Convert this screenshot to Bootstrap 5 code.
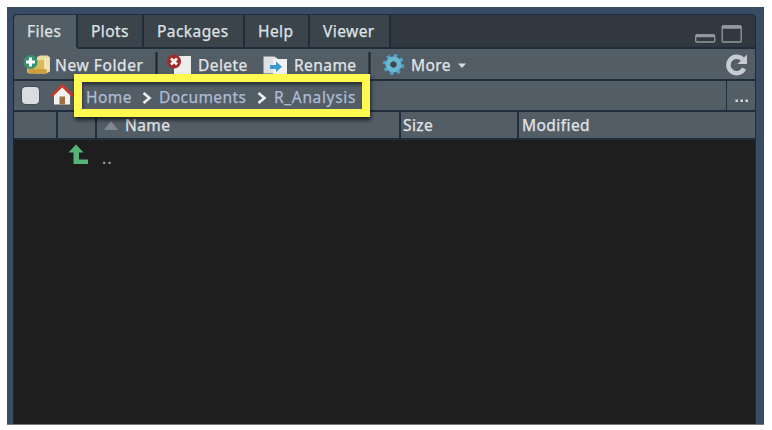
<!DOCTYPE html>
<html lang="en">
<head>
<meta charset="utf-8">
<meta name="viewport" content="width=device-width, initial-scale=1">
<title>Files pane</title>
<link href="https://cdn.jsdelivr.net/npm/bootstrap@5.3.0/dist/css/bootstrap.min.css" rel="stylesheet">
<style>
body{background:#fff;font-family:"Noto Sans","Open Sans",sans-serif;font-size:15.5px;line-height:20px;letter-spacing:.43px;color:#e2e5e8;-webkit-text-stroke:.25px}
svg{display:block;flex:none}
.pane{width:757px;height:418px;margin:7px 0 0 7px;padding:7px 8px 0 6px;background:#394c64;border-bottom:1px solid #777}
.pane-in{height:410px;background:#1e1e1e;border-left:1px solid #1d2a3c;border-right:1px solid #1d2a3c;border-radius:4px 4px 0 0;overflow:hidden}
.tabs{height:35px;background:#31383f;border-top:1px solid #1e2c3e}
.tabs button{border:0;padding:0 0 0 13px;text-align:left;color:#dfe2e5;background:#3c444b;border-right:2px solid #1f2d3d;border-bottom:2px solid #1f2d3d;letter-spacing:inherit;line-height:30px;-webkit-text-stroke:inherit}
.tabs button.on{background:#535d66;border-bottom-color:#535d66;border-radius:4px 0 0 0}
.tab-fill{border-bottom:2px solid #1f2d3d}
.bar{background:#535d66;border-bottom:2px solid #1f2d3d}
.tools{height:32px}.crumbs{height:31px}.heads{height:28px}
.w1{width:64px}.w2{width:66px}.w3{width:101px}.w4{width:65px}.w5{width:81px}
.tools .lbl{white-space:nowrap;padding-top:1px}
.t-new{width:88px;letter-spacing:.6px}.t-del{width:51px}.t-ren{width:63px}.t-more{width:43px}
.chk{width:17px;height:17px;margin-left:8px;background:#d9dce0;border-radius:4px;box-shadow:0 0 1px 1px #454e57}
.dots{width:29px;border-left:1px solid #1f2d3d}
.heads>div{border-right:2px solid #1f2d3d;line-height:26px;height:26px}
.heads>div:last-child{border:0}
.heads .h1c{width:44px}.heads .h2c{width:39px}.heads .h3c{width:304px}.heads .h4c{width:118px;padding-left:2px}.heads .h5c{padding-left:3px}
.up-name{margin-left:-22px;margin-top:8px;color:#aaa5bb;letter-spacing:1.3px}
.trail{left:74px;top:74px;width:296px;height:43px;border:8px solid #fff951;box-shadow:1px 3px 4px rgba(0,0,0,.65),inset 1px 3px 3px rgba(0,0,0,.45);background:#535d66;color:#aebbd5;padding-left:4px}
.trail a{color:inherit;text-decoration:none;white-space:nowrap;flex:none;padding-top:3px}
.c1{width:46px}.c2{width:88px}.c3{width:84px;letter-spacing:.65px}
</style>
<script src="https://cdn.jsdelivr.net/npm/bootstrap@5.3.0/dist/js/bootstrap.bundle.min.js"></script>
</head>
<body class="overflow-hidden">
<main class="pane">
<div class="pane-in">
  <div class="tabs d-flex">
    <button class="w1 on">Files</button><button class="w2">Plots</button><button class="w3">Packages</button><button class="w4">Help</button><button class="w5">Viewer</button>
    <div class="tab-fill flex-grow-1 d-flex justify-content-end">
      <svg width="62" height="30" viewBox="693 15 62 30" fill="none" stroke="#929a9f" stroke-width="1.3"><rect x="695.7" y="35" width="19" height="7" rx="1"/><path d="M696 35.700h18.500" stroke-width="3"/><rect x="722.2" y="26" width="19" height="16" rx="1"/><path d="M722.500 27h18.500" stroke-width="3.500"/></svg>
    </div>
  </div>
  <div class="bar tools d-flex align-items-center">
    <svg width="41" height="30" viewBox="14 49 41 30"><path d="M37 57l3-1.500h8l2 2v14l-4 2h-9z" fill="#e8dba8"/><path d="M45.500 58v13M48 58v12" stroke="#f7f1d2" stroke-width="1"/><path d="M27 60h17v13.500H29q-2 0-2-2z" fill="#dcb85c"/><path d="M28 69h18.500v4.500H29z" fill="#cba03d"/><circle cx="30.500" cy="62" r="7" fill="#36936f"/><path d="M30.500 57.500v9M26 62h9" stroke="#fff" stroke-width="3"/></svg>
    <span class="lbl t-new">New Folder</span>
    <svg width="55" height="30" viewBox="143 49 55 30"><path d="M155.500 52h2v22h-2z" fill="#1c242d"/><path d="M174 56h17v18h-17z" fill="#eeeeed"/><circle cx="174" cy="61.500" r="7" fill="#a52b2b"/><path d="m171 58.500 6 6m0-6-6 6" stroke="#fff" stroke-width="2.500"/></svg>
    <span class="lbl t-del">Delete</span>
    <svg width="45" height="30" viewBox="249 49 45 30"><path d="M263.500 56.500h11l3 2v15h-14z" fill="#dfe0e2"/><path d="M273 59h14v15h-14z" fill="#f1f1ef"/><path d="M270 65h6v-3.500l6 5.300-6 5.200v-3h-6z" fill="#3999ce"/></svg>
    <span class="lbl t-ren">Rename</span>
    <svg width="54" height="30" viewBox="357 49 54 30"><path d="M368.500 52h2v22h-2z" fill="#1c242d"/><circle cx="393.500" cy="64.500" r="9.100" fill="none" stroke="#4aa5c8" stroke-width="3" stroke-dasharray="3.400 3.750"/><circle cx="393.500" cy="64.500" r="5.500" fill="none" stroke="#68b7cf" stroke-width="5"/><circle cx="393.500" cy="64.500" r="3" fill="#3d4851"/></svg>
    <span class="lbl t-more">More</span>
    <svg width="14" height="30" viewBox="454 49 14 30"><path d="M458 63.500h8l-4 4.500z" fill="#d6dadd"/></svg>
    <svg class="ms-auto" width="36" height="30" viewBox="719 49 36 30"><path d="M744 68.500a8.200 8.200 0 1 1-1.500-9.200" fill="none" stroke="#c7cbd3" stroke-width="4.500"/><path d="M747 54.500v9.500h-9.500z" fill="#c7cbd3"/></svg>
  </div>
  <div class="bar crumbs d-flex align-items-center">
    <span class="chk"></span>
    <svg width="35" height="29" viewBox="39 81 35 29"><path d="M54 95l8-8 8 8v9.500H54z" fill="#f3f2f0"/><path d="M59.500 96.500h5.500v8h-5.500z" fill="#a17142"/><path d="M51.500 96 62.300 85.500 73 96" fill="none" stroke="#c93a2b" stroke-width="2.600"/></svg>
    <span class="dots ms-auto align-self-stretch"><svg width="28" height="29" viewBox="727 81 28 29" fill="#d9dce1"><path d="M735.500 99.500h2.400v2.400h-2.400zM740.500 99.500h2.400v2.400h-2.400zM745.500 99.500h2.400v2.400h-2.400z"/></svg></span>
  </div>
  <div class="bar heads d-flex">
    <div class="h1c"></div><div class="h2c"></div>
    <div class="h3c d-flex align-items-center"><svg width="28" height="26" viewBox="97 112 28 26"><path d="M104 130l7-9 7 9z" fill="#7f8994"/></svg><span>Name</span></div>
    <div class="h4c">Size</div><div class="h5c flex-grow-1">Modified</div>
  </div>
  <div class="d-flex">
    <svg width="110" height="34" viewBox="14 140 110 34"><path d="M76 144.500l7.500 8H79v7h9v4.500H73.500v-11.500h-5z" fill="#57b477"/></svg>
    <span class="up-name">..</span>
  </div>
</div>
</main>
<nav class="trail position-absolute d-flex align-items-center" aria-label="Path">
  <a href="#" class="c1">Home</a>
  <svg width="27" height="27" viewBox="132 82 27 27"><path d="m143.500 93 6 5-6 5" fill="none" stroke="#eceef0" stroke-width="2.600"/></svg>
  <a href="#" class="c2">Documents</a>
  <svg width="27" height="27" viewBox="247 82 27 27"><path d="m258.500 93 6 5-6 5" fill="none" stroke="#eceef0" stroke-width="2.600"/></svg>
  <a href="#" class="c3">R_Analysis</a>
</nav>
</body>
</html>
